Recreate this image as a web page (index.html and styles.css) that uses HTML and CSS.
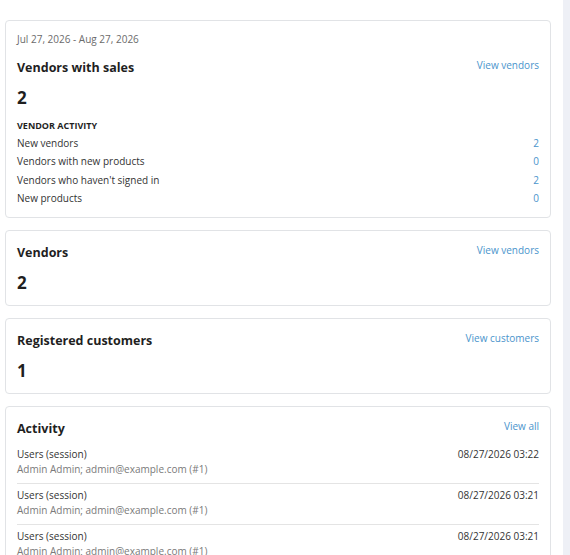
FILE: index.html
```html
<!DOCTYPE html>
<html lang="en">
<head>
    <meta charset="UTF-8">
    <meta name="viewport" content="width=device-width, initial-scale=1.0">
    <title>Vendor dashboard</title>
    <link rel="stylesheet" href="styles.css">
</head>
<body>
    <div class="layout">
        <main class="content">

            <section class="card card-summary">
                <div class="range">Jul 27, 2026 - Aug 27, 2026</div>
                <div class="card-head">
                    <h3>Vendors with sales</h3>
                    <a href="#" class="link">View vendors</a>
                </div>
                <div class="big-number">2</div>
                <h4>VENDOR ACTIVITY</h4>
                <ul class="stats">
                    <li><span>New vendors</span><a href="#" class="link">2</a></li>
                    <li><span>Vendors with new products</span><a href="#" class="link">0</a></li>
                    <li><span>Vendors who haven't signed in</span><a href="#" class="link">2</a></li>
                    <li><span>New products</span><a href="#" class="link">0</a></li>
                </ul>
            </section>

            <section class="card">
                <div class="card-head">
                    <h3>Vendors</h3>
                    <a href="#" class="link">View vendors</a>
                </div>
                <div class="big-number">2</div>
            </section>

            <section class="card">
                <div class="card-head">
                    <h3>Registered customers</h3>
                    <a href="#" class="link">View customers</a>
                </div>
                <div class="big-number">1</div>
            </section>

            <section class="card">
                <div class="card-head">
                    <h3>Activity</h3>
                    <a href="#" class="link">View all</a>
                </div>
                <ul class="activity">
                    <li>
                        <div>
                            <div class="act-title">Users (session)</div>
                            <div class="act-sub">Admin Admin; admin@example.com (#1)</div>
                        </div>
                        <div class="act-date">08/27/2026 03:22</div>
                    </li>
                    <li>
                        <div>
                            <div class="act-title">Users (session)</div>
                            <div class="act-sub">Admin Admin; admin@example.com (#1)</div>
                        </div>
                        <div class="act-date">08/27/2026 03:21</div>
                    </li>
                    <li>
                        <div>
                            <div class="act-title">Users (session)</div>
                            <div class="act-sub">Admin Admin; admin@example.com (#1)</div>
                        </div>
                        <div class="act-date">08/27/2026 03:21</div>
                    </li>
                </ul>
            </section>

        </main>
        <aside class="side"></aside>
    </div>
</body>
</html>
```

FILE: styles.css
```css
body {
    margin: 0;
    font-family: "Open Sans", "Noto Sans", sans-serif;
    font-size: 10px;
    color: #333;
    background: #fff;
}
.layout {
    display: flex;
    height: 555px;
    overflow: hidden;
}
.content {
    width: 546px;
    flex-shrink: 0;
    padding: 20px 12px 0 5px;
    display: flex;
    flex-direction: column;
    gap: 12px;
}
.side {
    flex: 1;
    background: #eef0f6;
}
.card {
    border: 1px solid #e1e3e6;
    border-radius: 4px;
    padding: 12px 11px 11px 11px;
}
.card-summary {
    padding-top: 11px;
    padding-bottom: 10px;
}
.range {
    color: #6b6b6b;
    line-height: 14px;
    margin-bottom: 12px;
}
.card-head {
    display: flex;
    justify-content: space-between;
    align-items: flex-start;
}
h3 {
    margin: 0;
    font-size: 12.5px;
    font-weight: 700;
    color: #1f1f1f;
    line-height: 20px;
}
.link {
    color: #4a94cc;
    text-decoration: none;
}
.card-head .link {
    line-height: 14px;
}
.big-number {
    font-size: 17px;
    font-weight: 700;
    color: #1f1f1f;
    margin-top: 9px;
    line-height: 22px;
}
h4 {
    margin: 10px 0 1px;
    font-size: 9px;
    font-weight: 700;
    color: #1f1f1f;
    line-height: 14px;
}
.stats {
    list-style: none;
    margin: 0;
    padding: 0;
}
.stats li {
    display: flex;
    justify-content: space-between;
    line-height: 18.25px;
}
.activity {
    list-style: none;
    margin: 4px 0 0;
    padding: 0;
}
.activity li {
    display: flex;
    justify-content: space-between;
    padding: 4px 0 6px;
    border-bottom: 1px solid #e4e4e4;
    line-height: 15px;
}
.act-sub {
    color: #7a7a7a;
}
.act-date {
    color: #333;
}
```
